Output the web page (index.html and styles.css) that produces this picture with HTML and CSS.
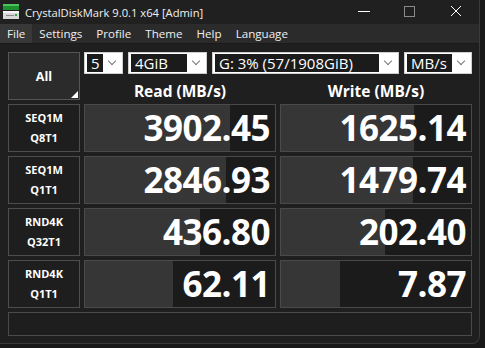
FILE: index.html
```html
<!DOCTYPE html>
<html>
  <head>
    <title>CrystalDiskMark</title>
    <link rel="stylesheet" href="styles.css">
  </head>
  <body>
    <div class="window">
      <div class="titlebar">
        <svg class="app-icon" width="16" height="16" viewBox="0 0 16 16">
          <rect x="0" y="0" width="16" height="6" fill="#1f8f2f"/>
          <rect x="0" y="0" width="16" height="2" fill="#4cc35a"/>
          <rect x="0" y="7" width="16" height="8" fill="#d8d8d8"/>
          <rect x="0" y="7" width="16" height="2" fill="#f4f4f4"/>
          <rect x="3" y="11" width="8" height="1" fill="#8a8a8a"/>
          <rect x="12" y="10" width="2" height="2" fill="#2fa83c"/>
        </svg>
        <span class="title">CrystalDiskMark 9.0.1 x64 [Admin]</span>
        <div class="controls">
          <svg width="46" height="24" viewBox="0 0 46 24"><line x1="17" y1="11.5" x2="29" y2="11.5" stroke="#fff" stroke-width="1"/></svg>
          <svg width="46" height="24" viewBox="0 0 46 24"><rect x="17.5" y="6.5" width="10" height="10" fill="none" stroke="#8a8a8a" stroke-width="1"/></svg>
          <svg width="46" height="24" viewBox="0 0 46 24"><path d="M18 6 L28 16 M28 6 L18 16" stroke="#fff" stroke-width="1"/></svg>
        </div>
      </div>

      <div class="menubar">
        <span class="menu-item active">File</span>
        <span class="menu-item">Settings</span>
        <span class="menu-item">Profile</span>
        <span class="menu-item">Theme</span>
        <span class="menu-item">Help</span>
        <span class="menu-item">Language</span>
      </div>

      <div class="main">
        <div class="all-btn">All</div>

        <div class="combos">
          <div class="combo c-count"><span class="sel">5</span><span class="arrow"></span></div>
          <div class="combo c-size"><span class="sel">4GiB</span><span class="arrow"></span></div>
          <div class="combo c-drive"><span class="sel">G: 3% (57/1908GiB)</span><span class="arrow"></span></div>
          <div class="combo c-unit"><span class="sel">MB/s</span><span class="arrow"></span></div>
        </div>

        <div class="head">Read (MB/s)</div>
        <div class="head">Write (MB/s)</div>

        <div class="label">SEQ1M<br>Q8T1</div>
        <div class="score" style="--fill: 76.3%">3902.45</div>
        <div class="score" style="--fill: 70%">1625.14</div>

        <div class="label">SEQ1M<br>Q1T1</div>
        <div class="score" style="--fill: 74.2%">2846.93</div>
        <div class="score" style="--fill: 69.5%">1479.74</div>

        <div class="label">RND4K<br>Q32T1</div>
        <div class="score" style="--fill: 60.5%">436.80</div>
        <div class="score" style="--fill: 54.7%">202.40</div>

        <div class="label">RND4K<br>Q1T1</div>
        <div class="score" style="--fill: 46.3%">62.11</div>
        <div class="score" style="--fill: 31%">7.87</div>

        <div class="comment"></div>
      </div>
    </div>
  </body>
</html>
```

FILE: styles.css
```css
body {
  margin: 0;
  background: #191919;
  font-family: "Open Sans", "Noto Sans", sans-serif;
  color: #fff;
}

.window {
  width: 479px;
  height: 343px;
  background: #1f1f1f;
  border-right: 1px solid #3a3a3a;
  border-bottom: 1px solid #3a3a3a;
  border-radius: 0 0 8px 0;
  overflow: hidden;
}

.titlebar {
  display: flex;
  align-items: center;
  height: 24px;
  background: #202020;
}

.app-icon {
  margin: 0 6px 0 3px;
}

.title {
  font-size: 11.2px;
  color: #f0f0f0;
}

.controls {
  margin-left: auto;
  display: flex;
}

.menubar {
  display: flex;
  height: 19px;
  background: #2b2b2b;
  border-bottom: 1px solid #1a1a1a;
}

.menu-item {
  padding: 0 7px;
  font-size: 11.6px;
  line-height: 19px;
  color: #f0f0f0;
}

.menu-item.active {
  background: #383838;
}

.main {
  display: grid;
  grid-template-columns: 72px 192px 192px;
  grid-template-rows: 22px 22px repeat(4, 48px) 24px;
  gap: 4px;
  padding: 8px;
}

.all-btn {
  grid-row: span 2;
  position: relative;
  display: flex;
  align-items: center;
  justify-content: center;
  background: #2b2b2b;
  border: 1px solid #555;
  font-weight: bold;
  font-size: 12.5px;
}

.all-btn::after {
  content: "";
  position: absolute;
  right: 1px;
  bottom: 1px;
  border-left: 7px solid transparent;
  border-bottom: 7px solid #fff;
}

.combos {
  grid-column: span 2;
  display: flex;
  gap: 5px;
}

.combo {
  display: flex;
  align-items: center;
  background: #fff;
  border: 1px solid #cfcfcf;
  box-sizing: border-box;
  height: 22px;
  padding-left: 2px;
}

.c-count { width: 39px; }
.c-size { width: 79px; }
.c-drive { width: 187px; }
.c-unit { width: 68px; }

.sel {
  flex: 1;
  height: 18px;
  background: #1b1b1b;
  color: #fff;
  font-size: 15px;
  line-height: 18px;
  padding-left: 4px;
  white-space: nowrap;
  overflow: hidden;
}

.arrow {
  width: 19px;
  height: 18px;
  position: relative;
}

.arrow::after {
  content: "";
  position: absolute;
  left: 6px;
  top: 4px;
  width: 5px;
  height: 5px;
  border-right: 1px solid #777;
  border-bottom: 1px solid #777;
  transform: rotate(45deg);
}

.head {
  text-align: center;
  font-weight: bold;
  font-size: 15.5px;
  line-height: 22px;
  padding-top: 2px;
}

.label {
  display: flex;
  align-items: center;
  justify-content: center;
  text-align: center;
  background: #1e1e1e;
  border: 1px solid #4e4e4e;
  font-weight: bold;
  font-size: 11px;
  line-height: 20px;
}

.score {
  border: 1px solid #4a4a4a;
  background: linear-gradient(to right, #363636 var(--fill), #1b1b1b var(--fill));
  text-align: right;
  padding-right: 5px;
  font-weight: bold;
  font-size: 35px;
  line-height: 46px;
  letter-spacing: -0.5px;
}

.comment {
  grid-column: span 3;
  border: 1px solid #4a4a4a;
  background: #1e1e1e;
}
```
